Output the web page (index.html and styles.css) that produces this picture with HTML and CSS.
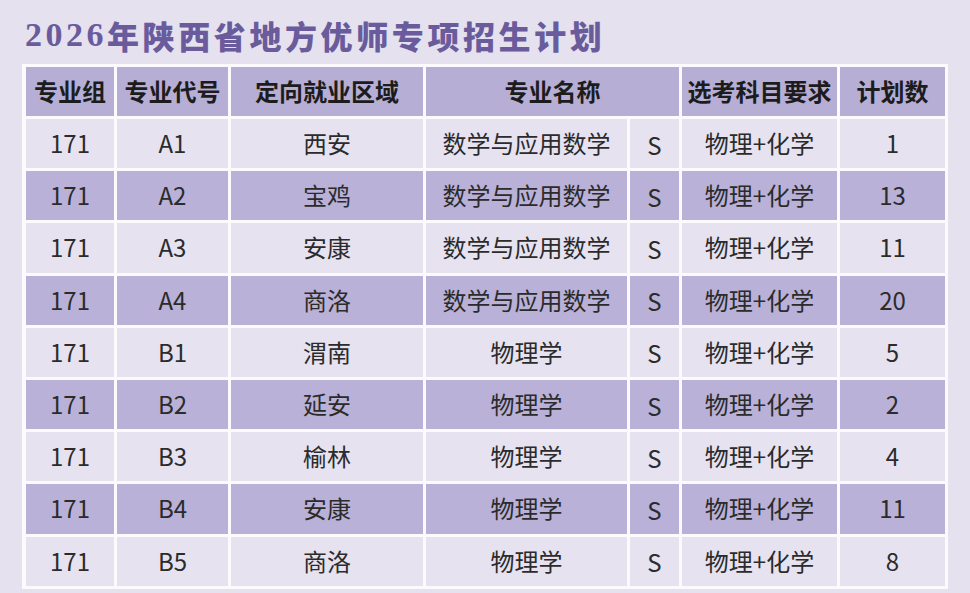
FILE: index.html
```html
<!DOCTYPE html>
<html lang="zh-CN">
<head>
<meta charset="utf-8">
<title>2026年陕西省地方优师专项招生计划</title>
<link rel="stylesheet" href="styles.css">
</head>
<body>
<div class="page">
  <h1 class="title"><span class="digits">2026</span>年陕西省地方优师专项招生计划</h1>
  <div class="frame">
    <div class="grid">
      <div class="cell head">专业组</div>
      <div class="cell head">专业代号</div>
      <div class="cell head">定向就业区域</div>
      <div class="cell head span2">专业名称</div>
      <div class="cell head">选考科目要求</div>
      <div class="cell head">计划数</div>

      <div class="cell">171</div><div class="cell">A1</div><div class="cell">西安</div><div class="cell">数学与应用数学</div><div class="cell s">S</div><div class="cell">物理+化学</div><div class="cell">1</div>
      <div class="cell dk">171</div><div class="cell dk">A2</div><div class="cell dk">宝鸡</div><div class="cell dk">数学与应用数学</div><div class="cell dk s">S</div><div class="cell dk">物理+化学</div><div class="cell dk">13</div>
      <div class="cell">171</div><div class="cell">A3</div><div class="cell">安康</div><div class="cell">数学与应用数学</div><div class="cell s">S</div><div class="cell">物理+化学</div><div class="cell">11</div>
      <div class="cell dk">171</div><div class="cell dk">A4</div><div class="cell dk">商洛</div><div class="cell dk">数学与应用数学</div><div class="cell dk s">S</div><div class="cell dk">物理+化学</div><div class="cell dk">20</div>
      <div class="cell">171</div><div class="cell">B1</div><div class="cell">渭南</div><div class="cell">物理学</div><div class="cell s">S</div><div class="cell">物理+化学</div><div class="cell">5</div>
      <div class="cell dk">171</div><div class="cell dk">B2</div><div class="cell dk">延安</div><div class="cell dk">物理学</div><div class="cell dk s">S</div><div class="cell dk">物理+化学</div><div class="cell dk">2</div>
      <div class="cell">171</div><div class="cell">B3</div><div class="cell">榆林</div><div class="cell">物理学</div><div class="cell s">S</div><div class="cell">物理+化学</div><div class="cell">4</div>
      <div class="cell dk">171</div><div class="cell dk">B4</div><div class="cell dk">安康</div><div class="cell dk">物理学</div><div class="cell dk s">S</div><div class="cell dk">物理+化学</div><div class="cell dk">11</div>
      <div class="cell">171</div><div class="cell">B5</div><div class="cell">商洛</div><div class="cell">物理学</div><div class="cell s">S</div><div class="cell">物理+化学</div><div class="cell">8</div>
    </div>
  </div>
</div>
</body>
</html>
```

FILE: styles.css
```css
html, body {
  margin: 0;
  padding: 0;
  background: #e5e1ef;
}
.page {
  width: 970px;
  height: 593px;
  overflow: hidden;
  background: #e5e1ef;
  font-family: "Noto Sans CJK SC", "Noto Sans", sans-serif;
}
.title {
  margin: 0;
  height: 64px;
  padding-left: 25px;
  box-sizing: border-box;
  display: flex;
  align-items: center;
  padding-top: 6px;
  font-family: "Noto Sans CJK SC", sans-serif;
  font-weight: 900;
  font-size: 32px;
  letter-spacing: 3.6px;
  color: #6a5c9c;
  line-height: 1;
}
.digits {
  font-family: "Liberation Serif", serif;
  font-weight: 700;
  font-size: 34px;
  letter-spacing: 3.5px;
}
.frame {
  margin-left: 22px;
  width: 926px;
  box-sizing: border-box;
  padding: 3px 3px 3px 4px;
  background: #fbfbfe;
}
.grid {
  display: grid;
  grid-template-columns: 88px 111px 192px 201px 49px 155px 105px;
  grid-template-rows: 49px;
  grid-auto-rows: 49.2px;
  gap: 3px;
}
.cell {
  display: flex;
  align-items: center;
  justify-content: center;
  background: #e6e2f0;
  color: #2b2b2b;
  font-size: 24px;
  white-space: nowrap;
  padding-bottom: 2px;
  box-sizing: border-box;
}
.cell.dk {
  background: #b9b1d7;
}
.cell.head {
  background: #b6aed4;
  font-weight: 700;
  font-size: 24px;
  color: #1c1c1c;
}
.cell.span2 {
  grid-column: span 2;
}
.cell.s {
  padding-top: 1px;
  padding-bottom: 0;
}
```
